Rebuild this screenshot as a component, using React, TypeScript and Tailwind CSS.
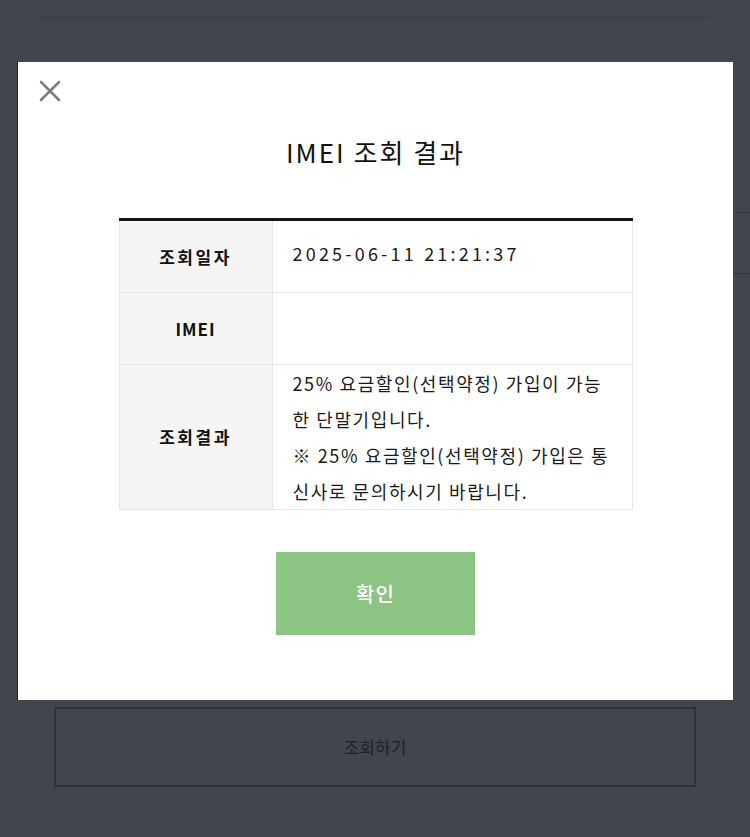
import React from "react";

const font = { fontFamily: '"Noto Sans CJK KR", "Noto Sans", sans-serif' };

export default function App() {
  return (
    <div
      className="relative w-[750px] h-[837px] overflow-hidden bg-[#42454e]"
      style={font}
    >
      {/* background page */}
      <div className="flex flex-col h-full">
        <div className="mt-[17px] mx-[40px] h-px bg-[#3a3c43]" />
        <div className="mt-[194px] ml-[700px] h-px bg-[#33353b]" />
        <div className="mt-[60px] ml-[700px] h-px bg-[#33353b]" />
        <div className="mt-[433px] mx-[54px] h-[80px] border-2 border-[#303137] flex items-center justify-center">
          <span className="text-[17px] text-[#202126]">조회하기</span>
        </div>
      </div>

      {/* modal */}
      <div className="absolute left-[18px] top-[62px] w-[715px] h-[638px] bg-white shadow-[-1px_0_0_#1f2024] flex flex-col items-center">
        <button className="absolute left-[21px] top-[18px] w-[22px] h-[22px] flex items-center justify-center">
          <svg width="22" height="22" viewBox="0 0 22 22">
            <path
              d="M2 2 L20 20 M20 2 L2 20"
              stroke="#7d7e82"
              strokeWidth="2.6"
              strokeLinecap="round"
            />
          </svg>
        </button>

        <h1 className="mt-[70px] text-[26px] leading-[40px] text-[#111] font-normal tracking-[2px]">
          IMEI 조회 결과
        </h1>

        <div className="mt-[46px] w-[514px] border-t-[3px] border-[#151515] flex flex-col">
          <div className="flex h-[72px] border-b border-[#e6e6e6]">
            <div className="w-[154px] bg-[#f5f5f5] border-l border-r border-[#e6e6e6] flex items-center justify-center text-[17px] font-bold text-[#111] tracking-[2.5px]">
              조회일자
            </div>
            <div className="flex-1 border-r border-[#e6e6e6] pl-[20px] pt-[19px] text-[18px] text-[#1a1a1a] tracking-[3.2px]">
              2025-06-11 21:21:37
            </div>
          </div>
          <div className="flex h-[72px] border-b border-[#e6e6e6]">
            <div className="w-[154px] bg-[#f5f5f5] border-l border-r border-[#e6e6e6] flex items-center justify-center text-[17px] font-bold text-[#111] tracking-[1px]">
              IMEI
            </div>
            <div className="flex-1 border-r border-[#e6e6e6]" />
          </div>
          <div className="flex h-[145px] border-b border-[#e6e6e6]">
            <div className="w-[154px] bg-[#f5f5f5] border-l border-r border-[#e6e6e6] flex items-center justify-center text-[17px] font-bold text-[#111] tracking-[2.5px]">
              조회결과
            </div>
            <div className="flex-1 border-r border-[#e6e6e6] pl-[20px] text-[18px] leading-[36px] text-[#1a1a1a] tracking-[1.6px] whitespace-nowrap flex flex-col">
              <span>25% 요금할인(선택약정) 가입이 가능</span>
              <span>한 단말기입니다.</span>
              <span>※ 25% 요금할인(선택약정) 가입은 통</span>
              <span>신사로 문의하시기 바랍니다.</span>
            </div>
          </div>
        </div>

        <button className="mt-[42px] w-[199px] h-[83px] bg-[#8cc484] flex items-center justify-center text-white text-[20px] font-medium tracking-[1px]">
          확인
        </button>
      </div>
    </div>
  );
}
